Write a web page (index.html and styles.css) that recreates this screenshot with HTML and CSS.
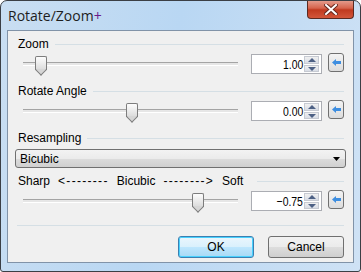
FILE: index.html
```html
<!DOCTYPE html>
<html lang="en">
<head>
  <meta charset="UTF-8">
  <title>Rotate/Zoom+</title>
  <link rel="stylesheet" href="styles.css">
</head>
<body>
  <div class="window">
    <div class="titlebar">
      <span class="title">Rotate/Zoom<span class="plus">+</span></span>
      <div class="close">
        <svg width="14" height="11" viewBox="0 0 14 11">
          <path d="M2 1 L12 10 M12 1 L2 10" stroke="#6a2a20" stroke-width="4" stroke-linecap="square"/>
          <path d="M2 1 L12 10 M12 1 L2 10" stroke="#fff" stroke-width="2" stroke-linecap="square"/>
        </svg>
      </div>
    </div>

    <div class="client">
      <div class="group-label"><span>Zoom</span><div class="rule"></div></div>
      <div class="slider-row">
        <div class="slider"><div class="track"></div><div class="thumb" style="left: 18px"></div></div>
        <div class="spin"><span class="value">1.00</span><div class="spin-btns"><div class="up"></div><div class="down"></div></div></div>
        <div class="reset"><svg width="9" height="7" viewBox="0 0 9 7"><path d="M0 3.5 L4 0 V2 H9 V5 H4 V7 Z" fill="#3e8ee0"/></svg></div>
      </div>

      <div class="group-label"><span>Rotate Angle</span><div class="rule"></div></div>
      <div class="slider-row">
        <div class="slider"><div class="track"></div><div class="thumb" style="left: 109px"></div></div>
        <div class="spin"><span class="value">0.00</span><div class="spin-btns"><div class="up"></div><div class="down"></div></div></div>
        <div class="reset"><svg width="9" height="7" viewBox="0 0 9 7"><path d="M0 3.5 L4 0 V2 H9 V5 H4 V7 Z" fill="#3e8ee0"/></svg></div>
      </div>

      <div class="group-label"><span>Resampling</span><div class="rule"></div></div>
      <div class="select">
        <span>Bicubic</span>
        <svg width="7" height="4" viewBox="0 0 7 4"><path d="M0 0 H7 L3.5 4 Z" fill="#000"/></svg>
      </div>

      <div class="group-label sharp">
        <span>Sharp</span><span class="dashes">&lt;--------</span><span>Bicubic</span><span class="dashes">--------&gt;</span><span>Soft</span>
        <div class="rule"></div>
      </div>
      <div class="slider-row">
        <div class="slider"><div class="track"></div><div class="thumb" style="left: 175px"></div></div>
        <div class="spin"><span class="value">&minus;0.75</span><div class="spin-btns"><div class="up"></div><div class="down"></div></div></div>
        <div class="reset"><svg width="9" height="7" viewBox="0 0 9 7"><path d="M0 3.5 L4 0 V2 H9 V5 H4 V7 Z" fill="#3e8ee0"/></svg></div>
      </div>

      <div class="separator"></div>

      <div class="buttons">
        <button class="btn default">OK</button>
        <button class="btn">Cancel</button>
      </div>
    </div>
  </div>
</body>
</html>
```

FILE: styles.css
```css
body {
  margin: 0;
  font-family: 'Liberation Sans', Arial, sans-serif;
  font-size: 12px;
  color: #000;
  background: #fff;
}

.window {
  width: 359px;
  height: 270px;
  border: 1px solid #3b3f45;
  border-radius: 7px 7px 3px 3px;
  background: linear-gradient(100deg, #c9def2 0%, #b9d7f3 45%, #cfe2f5 100%);
  display: flex;
  flex-direction: column;
  overflow: hidden;
}

.titlebar {
  height: 29px;
  display: flex;
  align-items: flex-start;
  justify-content: space-between;
  padding-left: 7px;
  padding-right: 6px;
}

.title {
  font-family: 'Open Sans', 'Liberation Sans', sans-serif;
  font-size: 14px;
  line-height: 29px;
  color: #1e1e1e;
}

.plus {
  color: #6a1a8c;
}

.close {
  width: 45px;
  height: 18px;
  margin-top: -1px;
  border: 1px solid #5a2a22;
  border-top: none;
  border-radius: 0 0 4px 4px;
  background: linear-gradient(#e6a293 0%, #d6644d 45%, #c0391f 55%, #d2563a 100%);
  display: flex;
  align-items: center;
  justify-content: center;
}

.client {
  margin: 0 6px 8px 6px;
  flex: 1;
  border: 1px solid #8193a8;
  background: #f0f0f0;
  padding: 6px 9px 0 9px;
  display: flex;
  flex-direction: column;
}

.group-label {
  display: flex;
  align-items: center;
  height: 14px;
  line-height: 14px;
  padding-left: 1px;
}

.group-label .rule {
  flex: 1;
  height: 1px;
  margin-left: 6px;
  background: #d5dfe5;
}

.sharp {
  margin-top: 6px;
  gap: 8px;
}

.sharp .dashes {
  letter-spacing: 1.3px;
}

.slider-row {
  display: flex;
  align-items: flex-start;
  height: 20px;
  margin-top: 3px;
  margin-bottom: 10px;
}

.slider {
  position: relative;
  width: 235px;
  height: 20px;
}

.track {
  position: absolute;
  left: 6px;
  right: 13px;
  top: 8px;
  height: 2px;
  border-top: 1px solid #a4a4a4;
  background: #e6e6e6;
  border-bottom: 1px solid #fff;
}

.thumb {
  position: absolute;
  top: 2px;
  width: 10px;
  height: 13px;
  border: 1px solid #7d7d7d;
  border-bottom: none;
  border-radius: 2px 2px 0 0;
  background: linear-gradient(#fdfdfd, #dadada);
}

.thumb::after {
  content: "";
  position: absolute;
  left: 1px;
  top: 9px;
  width: 7px;
  height: 7px;
  border-right: 1px solid #7d7d7d;
  border-bottom: 1px solid #7d7d7d;
  background: linear-gradient(135deg, transparent 50%, #d6d6d6 50%);
  transform: rotate(45deg);
}

.spin {
  width: 69px;
  height: 18px;
  border: 1px solid #abadb3;
  background: #fff;
  display: flex;
  align-items: center;
  justify-content: flex-end;
}

.spin .value {
  font-size: 13px;
  transform: scaleX(0.8);
  transform-origin: right center;
  margin-right: 1px;
}

.spin-btns {
  width: 15px;
  height: 16px;
  margin-right: 2px;
  display: flex;
  flex-direction: column;
  gap: 1px;
}

.spin-btns div {
  flex: 1;
  background: linear-gradient(#f0f0f0, #d8dde6);
  border: 1px solid #c6cad2;
  position: relative;
}

.spin-btns .up::after,
.spin-btns .down::after {
  content: "";
  position: absolute;
  left: 3px;
  top: 1px;
  border-left: 4px solid transparent;
  border-right: 4px solid transparent;
}

.spin-btns .up::after {
  border-bottom: 4px solid #4d6185;
}

.spin-btns .down::after {
  border-top: 4px solid #4d6185;
}

.reset {
  width: 14px;
  height: 17px;
  margin-left: 6px;
  margin-top: -1px;
  border: 1px solid #707070;
  border-radius: 3px;
  background: linear-gradient(#f4f4f4, #dcdcdc);
  display: flex;
  align-items: center;
  justify-content: center;
}

.select {
  height: 17px;
  margin: 4px -2px 0 -2px;
  border: 1px solid #707070;
  border-radius: 3px;
  background: linear-gradient(#f3f3f3 0%, #ebebeb 50%, #dcdcdc 51%, #d0d0d0 100%);
  display: flex;
  align-items: center;
  justify-content: space-between;
  padding: 0 5px 0 4px;
}

.separator {
  height: 1px;
  margin-top: 4px;
  background: #d5dfe5;
}

.buttons {
  display: flex;
  justify-content: flex-end;
  gap: 14px;
  margin-top: 10px;
}

.btn {
  width: 76px;
  height: 22px;
  font-family: 'Liberation Sans', Arial, sans-serif;
  font-size: 12px;
  border: 1px solid #707070;
  border-radius: 3px;
  background: linear-gradient(#f2f2f2 0%, #ebebeb 50%, #dddddd 51%, #cfcfcf 100%);
  color: #000;
  padding: 0;
}

.btn.default {
  border-color: #3c7fb1;
  background: linear-gradient(#eaf6fd 0%, #d9f0fc 50%, #bee6fd 51%, #a7d9f5 100%);
  box-shadow: inset 0 0 0 1px #48d1fe;
}
```
